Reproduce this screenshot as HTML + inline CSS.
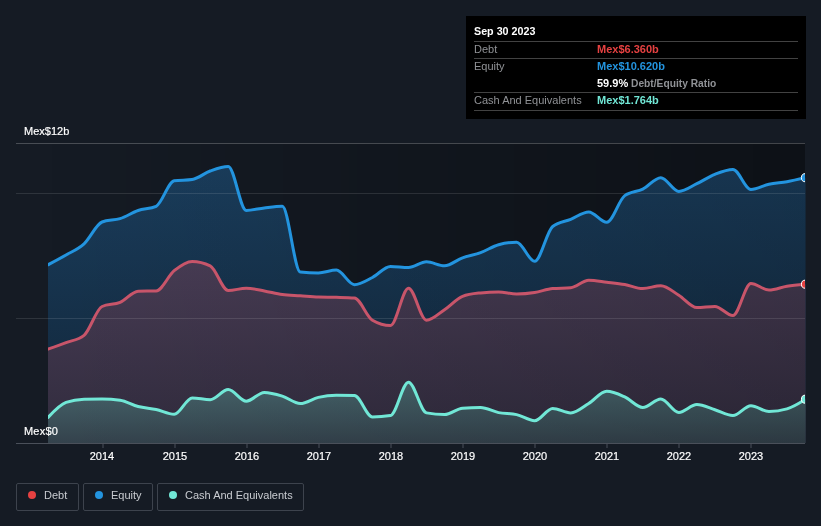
<!DOCTYPE html>
<html><head><meta charset="utf-8">
<style>
html,body{margin:0;padding:0;background:#151b24;}
body{width:821px;height:526px;overflow:hidden;position:relative;font-family:"Liberation Sans",sans-serif;}
svg{position:absolute;left:0;top:0;}
body>*{will-change:transform;}
svg text{font-family:"Liberation Sans",sans-serif;}
.tip{position:absolute;left:466px;top:16px;width:340px;height:103px;background:#000;color:#fff;font-size:11px;}
.tip .row{position:absolute;left:8px;right:8px;height:17px;line-height:17px;border-bottom:1px solid #424242;white-space:nowrap;}
.tip .lab{position:absolute;left:0;color:#909296;}
.tip .val{position:absolute;left:123px;font-weight:bold;}
.leg{position:absolute;top:483px;height:26px;border:1px solid #3d434d;border-radius:2px;box-sizing:content-box;color:#c9ccd1;font-size:11px;line-height:26px;white-space:nowrap;}
.leg i{position:absolute;left:10.5px;top:7px;width:8px;height:8px;border-radius:50%;}
.leg span{position:absolute;left:27px;top:-2px;}
</style></head><body>
<svg width="821" height="526" viewBox="0 0 821 526">
<defs>
<linearGradient id="gp" x1="48" y1="0" x2="805" y2="0" gradientUnits="userSpaceOnUse"><stop offset="0" stop-color="#000" stop-opacity="0"/><stop offset="1" stop-color="#000" stop-opacity="0.36"/></linearGradient>
<linearGradient id="gh" x1="48" y1="0" x2="805" y2="0" gradientUnits="userSpaceOnUse"><stop offset="0" stop-color="#000" stop-opacity="0"/><stop offset="1" stop-color="#000" stop-opacity="0.15"/></linearGradient>
<clipPath id="cp"><rect x="48" y="140" width="757" height="310"/></clipPath>
<linearGradient id="ge" x1="0" y1="166" x2="0" y2="443" gradientUnits="userSpaceOnUse"><stop offset="0" stop-color="#1a3d5c"/><stop offset="1" stop-color="#112538"/></linearGradient>
<linearGradient id="gd" x1="0" y1="261" x2="0" y2="443" gradientUnits="userSpaceOnUse"><stop offset="0" stop-color="#483c54"/><stop offset="1" stop-color="#302b3d"/></linearGradient>
<linearGradient id="gc" x1="0" y1="382" x2="0" y2="443" gradientUnits="userSpaceOnUse"><stop offset="0" stop-color="#47666d"/><stop offset="1" stop-color="#34424c"/></linearGradient>
</defs>
<rect x="48" y="143" width="757" height="300" fill="url(#gp)"/>
<path d="M48.00,264.80C54.01,261.65,60.02,258.50,66.02,255.00C72.03,251.50,78.04,249.30,84.05,243.80C90.06,238.30,96.06,224.27,102.07,222.00C108.08,219.73,114.09,220.52,120.10,218.60C126.10,216.68,132.11,212.55,138.12,210.50C144.13,208.45,150.13,209.10,156.14,206.30C162.15,203.50,168.16,181.67,174.17,180.80C180.17,179.93,186.18,180.37,192.19,179.50C198.20,178.63,204.21,173.17,210.21,171.00C216.22,168.83,222.23,166.50,228.24,166.50C234.25,166.50,240.25,210.50,246.26,210.50C252.27,210.50,258.28,208.62,264.29,207.90C270.29,207.18,276.30,206.20,282.31,206.20C288.32,206.20,294.33,271.50,300.33,272.10C306.34,272.70,312.35,273.00,318.36,273.00C324.37,273.00,330.37,270.10,336.38,270.10C342.39,270.10,348.40,284.70,354.40,284.70C360.41,284.70,366.42,280.55,372.43,277.50C378.44,274.45,384.44,266.40,390.45,266.40C396.46,266.40,402.47,267.50,408.48,267.50C414.48,267.50,420.49,261.80,426.50,261.80C432.51,261.80,438.52,265.80,444.52,265.80C450.53,265.80,456.54,259.98,462.55,257.80C468.56,255.62,474.56,254.88,480.57,252.70C486.58,250.52,492.59,246.37,498.60,244.70C504.60,243.03,510.61,242.20,516.62,242.20C522.63,242.20,528.63,261.30,534.64,261.30C540.65,261.30,546.66,231.30,552.67,226.50C558.67,221.70,564.68,221.73,570.69,219.30C576.70,216.87,582.71,211.90,588.71,211.90C594.72,211.90,600.73,222.20,606.74,222.20C612.75,222.20,618.75,199.93,624.76,195.60C630.77,191.27,636.78,192.08,642.79,189.10C648.79,186.12,654.80,177.70,660.81,177.70C666.82,177.70,672.83,191.40,678.83,191.40C684.84,191.40,690.85,186.55,696.86,183.70C702.87,180.85,708.87,176.68,714.88,174.30C720.89,171.92,726.90,169.40,732.90,169.40C738.91,169.40,744.92,189.40,750.93,189.40C756.94,189.40,762.94,185.48,768.95,184.20C774.96,182.92,780.97,182.76,786.98,181.70C793.15,180.61,799.33,179.15,805.50,177.70L805.50,443L48.00,443Z" fill="url(#ge)"/>
<path d="M48.00,349.10C54.01,347.00,60.02,344.90,66.02,342.60C72.03,340.30,78.04,340.17,84.05,335.30C90.06,330.43,96.06,309.23,102.07,306.50C108.08,303.77,114.09,304.95,120.10,302.40C126.10,299.85,132.11,291.40,138.12,291.20C144.13,291.00,150.13,291.10,156.14,290.90C162.15,290.70,168.16,275.62,174.17,270.70C180.17,265.78,186.18,261.40,192.19,261.40C198.20,261.40,204.21,262.87,210.21,265.80C216.22,268.73,222.23,290.50,228.24,290.50C234.25,290.50,240.25,288.20,246.26,288.20C252.27,288.20,258.28,289.83,264.29,290.90C270.29,291.97,276.30,293.80,282.31,294.60C288.32,295.40,294.33,295.40,300.33,295.80C306.34,296.20,312.35,296.80,318.36,297.00C324.37,297.20,330.37,297.13,336.38,297.30C342.39,297.47,348.40,297.53,354.40,298.00C360.41,298.47,366.42,316.67,372.43,320.20C378.44,323.73,384.44,325.50,390.45,325.50C396.46,325.50,402.47,288.20,408.48,288.20C414.48,288.20,420.49,320.20,426.50,320.20C432.51,320.20,438.52,313.68,444.52,309.70C450.53,305.72,456.54,298.57,462.55,296.30C468.56,294.03,474.56,293.57,480.57,292.90C486.58,292.23,492.59,291.90,498.60,291.90C504.60,291.90,510.61,294.10,516.62,294.10C522.63,294.10,528.63,293.53,534.64,292.60C540.65,291.67,546.66,288.97,552.67,288.50C558.67,288.03,564.68,288.27,570.69,287.80C576.70,287.33,582.71,280.30,588.71,280.30C594.72,280.30,600.73,281.50,606.74,282.20C612.75,282.90,618.75,283.43,624.76,284.50C630.77,285.57,636.78,288.60,642.79,288.60C648.79,288.60,654.80,285.70,660.81,285.70C666.82,285.70,672.83,291.65,678.83,295.30C684.84,298.95,690.85,307.60,696.86,307.60C702.87,307.60,708.87,306.40,714.88,306.40C720.89,306.40,726.90,315.50,732.90,315.50C738.91,315.50,744.92,283.60,750.93,283.60C756.94,283.60,762.94,290.00,768.95,290.00C774.96,290.00,780.97,287.16,786.98,286.20C793.15,285.21,799.33,284.71,805.50,284.20L805.50,443L48.00,443Z" fill="url(#gd)"/>
<path d="M48.00,417.50C54.01,411.02,60.02,404.53,66.02,402.40C72.03,400.27,78.04,399.33,84.05,399.20C90.06,399.07,96.06,399.00,102.07,399.00C108.08,399.00,114.09,399.40,120.10,400.20C126.10,401.00,132.11,404.95,138.12,406.50C144.13,408.05,150.13,408.20,156.14,409.50C162.15,410.80,168.16,414.30,174.17,414.30C180.17,414.30,186.18,398.00,192.19,398.00C198.20,398.00,204.21,399.70,210.21,399.70C216.22,399.70,222.23,389.50,228.24,389.50C234.25,389.50,240.25,401.20,246.26,401.20C252.27,401.20,258.28,392.40,264.29,392.40C270.29,392.40,276.30,394.25,282.31,396.10C288.32,397.95,294.33,403.50,300.33,403.50C306.34,403.50,312.35,398.77,318.36,397.40C324.37,396.03,330.37,395.30,336.38,395.30C342.39,395.30,348.40,395.40,354.40,395.60C360.41,395.80,366.42,417.00,372.43,417.00C378.44,417.00,384.44,416.53,390.45,415.60C396.46,414.67,402.47,382.20,408.48,382.20C414.48,382.20,420.49,411.77,426.50,412.90C432.51,414.03,438.52,414.60,444.52,414.60C450.53,414.60,456.54,408.67,462.55,408.20C468.56,407.73,474.56,407.50,480.57,407.50C486.58,407.50,492.59,411.42,498.60,412.60C504.60,413.78,510.61,413.27,516.62,414.60C522.63,415.93,528.63,420.70,534.64,420.70C540.65,420.70,546.66,408.50,552.67,408.50C558.67,408.50,564.68,412.90,570.69,412.90C576.70,412.90,582.71,407.10,588.71,403.50C594.72,399.90,600.73,391.30,606.74,391.30C612.75,391.30,618.75,394.22,624.76,396.90C630.77,399.58,636.78,407.40,642.79,407.40C648.79,407.40,654.80,398.90,660.81,398.90C666.82,398.90,672.83,412.40,678.83,412.40C684.84,412.40,690.85,404.50,696.86,404.50C702.87,404.50,708.87,407.95,714.88,409.80C720.89,411.65,726.90,415.60,732.90,415.60C738.91,415.60,744.92,405.70,750.93,405.70C756.94,405.70,762.94,411.50,768.95,411.50C774.96,411.50,780.97,410.63,786.98,408.90C793.15,407.12,799.33,403.16,805.50,399.20L805.50,443L48.00,443Z" fill="url(#gc)"/>
<path d="M48.00,264.80C54.01,261.65,60.02,258.50,66.02,255.00C72.03,251.50,78.04,249.30,84.05,243.80C90.06,238.30,96.06,224.27,102.07,222.00C108.08,219.73,114.09,220.52,120.10,218.60C126.10,216.68,132.11,212.55,138.12,210.50C144.13,208.45,150.13,209.10,156.14,206.30C162.15,203.50,168.16,181.67,174.17,180.80C180.17,179.93,186.18,180.37,192.19,179.50C198.20,178.63,204.21,173.17,210.21,171.00C216.22,168.83,222.23,166.50,228.24,166.50C234.25,166.50,240.25,210.50,246.26,210.50C252.27,210.50,258.28,208.62,264.29,207.90C270.29,207.18,276.30,206.20,282.31,206.20C288.32,206.20,294.33,271.50,300.33,272.10C306.34,272.70,312.35,273.00,318.36,273.00C324.37,273.00,330.37,270.10,336.38,270.10C342.39,270.10,348.40,284.70,354.40,284.70C360.41,284.70,366.42,280.55,372.43,277.50C378.44,274.45,384.44,266.40,390.45,266.40C396.46,266.40,402.47,267.50,408.48,267.50C414.48,267.50,420.49,261.80,426.50,261.80C432.51,261.80,438.52,265.80,444.52,265.80C450.53,265.80,456.54,259.98,462.55,257.80C468.56,255.62,474.56,254.88,480.57,252.70C486.58,250.52,492.59,246.37,498.60,244.70C504.60,243.03,510.61,242.20,516.62,242.20C522.63,242.20,528.63,261.30,534.64,261.30C540.65,261.30,546.66,231.30,552.67,226.50C558.67,221.70,564.68,221.73,570.69,219.30C576.70,216.87,582.71,211.90,588.71,211.90C594.72,211.90,600.73,222.20,606.74,222.20C612.75,222.20,618.75,199.93,624.76,195.60C630.77,191.27,636.78,192.08,642.79,189.10C648.79,186.12,654.80,177.70,660.81,177.70C666.82,177.70,672.83,191.40,678.83,191.40C684.84,191.40,690.85,186.55,696.86,183.70C702.87,180.85,708.87,176.68,714.88,174.30C720.89,171.92,726.90,169.40,732.90,169.40C738.91,169.40,744.92,189.40,750.93,189.40C756.94,189.40,762.94,185.48,768.95,184.20C774.96,182.92,780.97,182.76,786.98,181.70C793.15,180.61,799.33,179.15,805.50,177.70L805.50,443L48.00,443Z" fill="url(#gh)"/>
<g stroke="#ffffff" stroke-opacity="0.11" stroke-width="1">
<line x1="16" y1="143.5" x2="805" y2="143.5" stroke-opacity="0.22"/>
<line x1="16" y1="193.5" x2="805" y2="193.5"/>
<line x1="16" y1="318.5" x2="805" y2="318.5"/>
</g>
<path clip-path="url(#cp)" d="M48.00,264.80C54.01,261.65,60.02,258.50,66.02,255.00C72.03,251.50,78.04,249.30,84.05,243.80C90.06,238.30,96.06,224.27,102.07,222.00C108.08,219.73,114.09,220.52,120.10,218.60C126.10,216.68,132.11,212.55,138.12,210.50C144.13,208.45,150.13,209.10,156.14,206.30C162.15,203.50,168.16,181.67,174.17,180.80C180.17,179.93,186.18,180.37,192.19,179.50C198.20,178.63,204.21,173.17,210.21,171.00C216.22,168.83,222.23,166.50,228.24,166.50C234.25,166.50,240.25,210.50,246.26,210.50C252.27,210.50,258.28,208.62,264.29,207.90C270.29,207.18,276.30,206.20,282.31,206.20C288.32,206.20,294.33,271.50,300.33,272.10C306.34,272.70,312.35,273.00,318.36,273.00C324.37,273.00,330.37,270.10,336.38,270.10C342.39,270.10,348.40,284.70,354.40,284.70C360.41,284.70,366.42,280.55,372.43,277.50C378.44,274.45,384.44,266.40,390.45,266.40C396.46,266.40,402.47,267.50,408.48,267.50C414.48,267.50,420.49,261.80,426.50,261.80C432.51,261.80,438.52,265.80,444.52,265.80C450.53,265.80,456.54,259.98,462.55,257.80C468.56,255.62,474.56,254.88,480.57,252.70C486.58,250.52,492.59,246.37,498.60,244.70C504.60,243.03,510.61,242.20,516.62,242.20C522.63,242.20,528.63,261.30,534.64,261.30C540.65,261.30,546.66,231.30,552.67,226.50C558.67,221.70,564.68,221.73,570.69,219.30C576.70,216.87,582.71,211.90,588.71,211.90C594.72,211.90,600.73,222.20,606.74,222.20C612.75,222.20,618.75,199.93,624.76,195.60C630.77,191.27,636.78,192.08,642.79,189.10C648.79,186.12,654.80,177.70,660.81,177.70C666.82,177.70,672.83,191.40,678.83,191.40C684.84,191.40,690.85,186.55,696.86,183.70C702.87,180.85,708.87,176.68,714.88,174.30C720.89,171.92,726.90,169.40,732.90,169.40C738.91,169.40,744.92,189.40,750.93,189.40C756.94,189.40,762.94,185.48,768.95,184.20C774.96,182.92,780.97,182.76,786.98,181.70C793.15,180.61,799.33,179.15,805.50,177.70" fill="none" stroke="#2394df" stroke-width="3" stroke-linejoin="round" stroke-linecap="round"/>
<path clip-path="url(#cp)" d="M48.00,349.10C54.01,347.00,60.02,344.90,66.02,342.60C72.03,340.30,78.04,340.17,84.05,335.30C90.06,330.43,96.06,309.23,102.07,306.50C108.08,303.77,114.09,304.95,120.10,302.40C126.10,299.85,132.11,291.40,138.12,291.20C144.13,291.00,150.13,291.10,156.14,290.90C162.15,290.70,168.16,275.62,174.17,270.70C180.17,265.78,186.18,261.40,192.19,261.40C198.20,261.40,204.21,262.87,210.21,265.80C216.22,268.73,222.23,290.50,228.24,290.50C234.25,290.50,240.25,288.20,246.26,288.20C252.27,288.20,258.28,289.83,264.29,290.90C270.29,291.97,276.30,293.80,282.31,294.60C288.32,295.40,294.33,295.40,300.33,295.80C306.34,296.20,312.35,296.80,318.36,297.00C324.37,297.20,330.37,297.13,336.38,297.30C342.39,297.47,348.40,297.53,354.40,298.00C360.41,298.47,366.42,316.67,372.43,320.20C378.44,323.73,384.44,325.50,390.45,325.50C396.46,325.50,402.47,288.20,408.48,288.20C414.48,288.20,420.49,320.20,426.50,320.20C432.51,320.20,438.52,313.68,444.52,309.70C450.53,305.72,456.54,298.57,462.55,296.30C468.56,294.03,474.56,293.57,480.57,292.90C486.58,292.23,492.59,291.90,498.60,291.90C504.60,291.90,510.61,294.10,516.62,294.10C522.63,294.10,528.63,293.53,534.64,292.60C540.65,291.67,546.66,288.97,552.67,288.50C558.67,288.03,564.68,288.27,570.69,287.80C576.70,287.33,582.71,280.30,588.71,280.30C594.72,280.30,600.73,281.50,606.74,282.20C612.75,282.90,618.75,283.43,624.76,284.50C630.77,285.57,636.78,288.60,642.79,288.60C648.79,288.60,654.80,285.70,660.81,285.70C666.82,285.70,672.83,291.65,678.83,295.30C684.84,298.95,690.85,307.60,696.86,307.60C702.87,307.60,708.87,306.40,714.88,306.40C720.89,306.40,726.90,315.50,732.90,315.50C738.91,315.50,744.92,283.60,750.93,283.60C756.94,283.60,762.94,290.00,768.95,290.00C774.96,290.00,780.97,287.16,786.98,286.20C793.15,285.21,799.33,284.71,805.50,284.20" fill="none" stroke="#c8556a" stroke-width="3" stroke-linejoin="round" stroke-linecap="round"/>
<path clip-path="url(#cp)" d="M48.00,417.50C54.01,411.02,60.02,404.53,66.02,402.40C72.03,400.27,78.04,399.33,84.05,399.20C90.06,399.07,96.06,399.00,102.07,399.00C108.08,399.00,114.09,399.40,120.10,400.20C126.10,401.00,132.11,404.95,138.12,406.50C144.13,408.05,150.13,408.20,156.14,409.50C162.15,410.80,168.16,414.30,174.17,414.30C180.17,414.30,186.18,398.00,192.19,398.00C198.20,398.00,204.21,399.70,210.21,399.70C216.22,399.70,222.23,389.50,228.24,389.50C234.25,389.50,240.25,401.20,246.26,401.20C252.27,401.20,258.28,392.40,264.29,392.40C270.29,392.40,276.30,394.25,282.31,396.10C288.32,397.95,294.33,403.50,300.33,403.50C306.34,403.50,312.35,398.77,318.36,397.40C324.37,396.03,330.37,395.30,336.38,395.30C342.39,395.30,348.40,395.40,354.40,395.60C360.41,395.80,366.42,417.00,372.43,417.00C378.44,417.00,384.44,416.53,390.45,415.60C396.46,414.67,402.47,382.20,408.48,382.20C414.48,382.20,420.49,411.77,426.50,412.90C432.51,414.03,438.52,414.60,444.52,414.60C450.53,414.60,456.54,408.67,462.55,408.20C468.56,407.73,474.56,407.50,480.57,407.50C486.58,407.50,492.59,411.42,498.60,412.60C504.60,413.78,510.61,413.27,516.62,414.60C522.63,415.93,528.63,420.70,534.64,420.70C540.65,420.70,546.66,408.50,552.67,408.50C558.67,408.50,564.68,412.90,570.69,412.90C576.70,412.90,582.71,407.10,588.71,403.50C594.72,399.90,600.73,391.30,606.74,391.30C612.75,391.30,618.75,394.22,624.76,396.90C630.77,399.58,636.78,407.40,642.79,407.40C648.79,407.40,654.80,398.90,660.81,398.90C666.82,398.90,672.83,412.40,678.83,412.40C684.84,412.40,690.85,404.50,696.86,404.50C702.87,404.50,708.87,407.95,714.88,409.80C720.89,411.65,726.90,415.60,732.90,415.60C738.91,415.60,744.92,405.70,750.93,405.70C756.94,405.70,762.94,411.50,768.95,411.50C774.96,411.50,780.97,410.63,786.98,408.90C793.15,407.12,799.33,403.16,805.50,399.20" fill="none" stroke="#71e7d6" stroke-width="3" stroke-linejoin="round" stroke-linecap="round"/>
<line x1="16" y1="443.5" x2="805" y2="443.5" stroke="#4a505a" stroke-width="1"/>
<g stroke="#4a505a" stroke-width="1">
<line x1="103" y1="444" x2="103" y2="448"/><line x1="175" y1="444" x2="175" y2="448"/><line x1="247" y1="444" x2="247" y2="448"/><line x1="319" y1="444" x2="319" y2="448"/><line x1="391" y1="444" x2="391" y2="448"/><line x1="463" y1="444" x2="463" y2="448"/><line x1="535" y1="444" x2="535" y2="448"/><line x1="607" y1="444" x2="607" y2="448"/><line x1="679" y1="444" x2="679" y2="448"/><line x1="751" y1="444" x2="751" y2="448"/>
</g>
<g clip-path="url(#cp)" stroke="#fff" stroke-width="1">
<circle cx="805.5" cy="177.7" r="4.1" fill="#2394df"/>
<circle cx="805.5" cy="284.2" r="4.1" fill="#e64141"/>
<circle cx="805.5" cy="399.2" r="4.1" fill="#71e7d6"/>
</g>
<g fill="#ffffff" stroke="#ffffff" stroke-width="0.18" font-size="11" text-anchor="middle">
<text x="102" y="460">2014</text><text x="175" y="460">2015</text><text x="247" y="460">2016</text><text x="319" y="460">2017</text><text x="391" y="460">2018</text><text x="463" y="460">2019</text><text x="535" y="460">2020</text><text x="607" y="460">2021</text><text x="679" y="460">2022</text><text x="751" y="460">2023</text>
</g>
<g fill="#ffffff" stroke="#ffffff" stroke-width="0.18" font-size="11">
<text x="24" y="135">Mex$12b</text>
<text x="24" y="435" letter-spacing="0.2">Mex$0</text>
</g>
</svg>
<div class="tip">
<div class="row" style="top:6px;height:19px;line-height:19px"><span class="lab" style="color:#fff;font-weight:bold;display:inline-block;transform:scaleX(0.975);transform-origin:0 50%">Sep 30 2023</span></div>
<div class="row" style="top:25px"><span class="lab">Debt</span><span class="val" style="color:#e64141">Mex$6.360b</span></div>
<div class="row" style="top:42px;border-bottom:none"><span class="lab">Equity</span><span class="val" style="color:#2394df">Mex$10.620b</span></div>
<div class="row" style="top:59px"><span class="val" style="color:#fff">59.9% <span style="color:#909296;display:inline-block;transform:scaleX(0.93);transform-origin:0 50%">Debt/Equity Ratio</span></span></div>
<div class="row" style="top:76px;height:18px"><span class="lab">Cash And Equivalents</span><span class="val" style="color:#71e7d6">Mex$1.764b</span></div>
</div>
<div class="leg" style="left:16px;width:61px"><i style="background:#e64141"></i><span>Debt</span></div>
<div class="leg" style="left:83px;width:68px"><i style="background:#2394df"></i><span>Equity</span></div>
<div class="leg" style="left:157px;width:145px"><i style="background:#71e7d6"></i><span>Cash And Equivalents</span></div>
</body></html>
